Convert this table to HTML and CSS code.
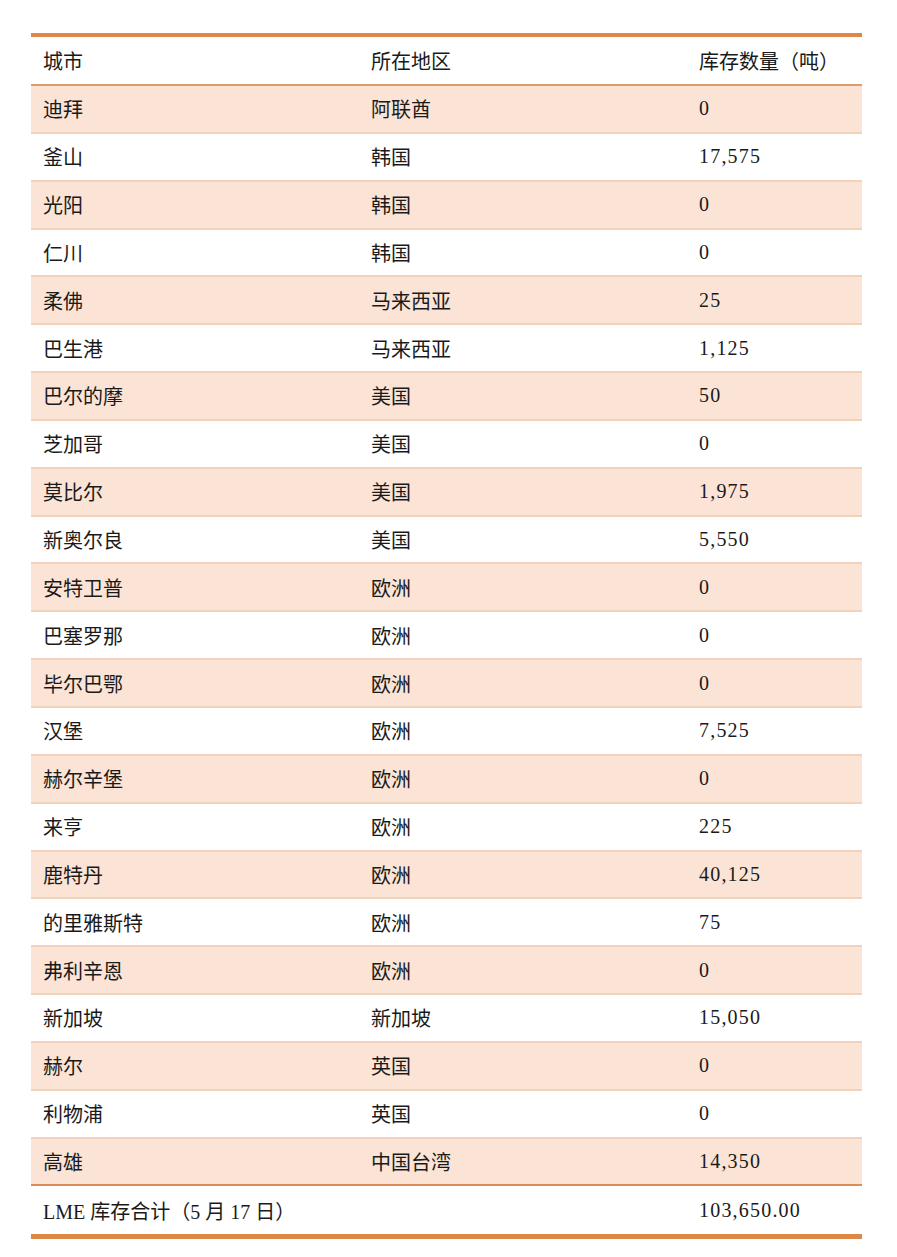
FILE: index.html
```html
<!DOCTYPE html>
<html lang="zh-CN">
<head>
<meta charset="utf-8">
<title>LME 库存</title>
<link rel="stylesheet" href="styles.css">
</head>
<body>
<table class="stock">
  <thead>
    <tr><th>城市</th><th>所在地区</th><th>库存数量（吨）</th></tr>
  </thead>
  <tbody>
    <tr class="alt"><td>迪拜</td><td>阿联酋</td><td>0</td></tr>
    <tr><td>釜山</td><td>韩国</td><td>17,575</td></tr>
    <tr class="alt"><td>光阳</td><td>韩国</td><td>0</td></tr>
    <tr><td>仁川</td><td>韩国</td><td>0</td></tr>
    <tr class="alt"><td>柔佛</td><td>马来西亚</td><td>25</td></tr>
    <tr><td>巴生港</td><td>马来西亚</td><td>1,125</td></tr>
    <tr class="alt"><td>巴尔的摩</td><td>美国</td><td>50</td></tr>
    <tr><td>芝加哥</td><td>美国</td><td>0</td></tr>
    <tr class="alt"><td>莫比尔</td><td>美国</td><td>1,975</td></tr>
    <tr><td>新奥尔良</td><td>美国</td><td>5,550</td></tr>
    <tr class="alt"><td>安特卫普</td><td>欧洲</td><td>0</td></tr>
    <tr><td>巴塞罗那</td><td>欧洲</td><td>0</td></tr>
    <tr class="alt"><td>毕尔巴鄂</td><td>欧洲</td><td>0</td></tr>
    <tr><td>汉堡</td><td>欧洲</td><td>7,525</td></tr>
    <tr class="alt"><td>赫尔辛堡</td><td>欧洲</td><td>0</td></tr>
    <tr><td>来亨</td><td>欧洲</td><td>225</td></tr>
    <tr class="alt"><td>鹿特丹</td><td>欧洲</td><td>40,125</td></tr>
    <tr><td>的里雅斯特</td><td>欧洲</td><td>75</td></tr>
    <tr class="alt"><td>弗利辛恩</td><td>欧洲</td><td>0</td></tr>
    <tr><td>新加坡</td><td>新加坡</td><td>15,050</td></tr>
    <tr class="alt"><td>赫尔</td><td>英国</td><td>0</td></tr>
    <tr><td>利物浦</td><td>英国</td><td>0</td></tr>
    <tr class="alt last"><td>高雄</td><td>中国台湾</td><td>14,350</td></tr>
  </tbody>
  <tfoot>
    <tr><td colspan="2">LME 库存合计（5 月 17 日）</td><td>103,650.00</td></tr>
  </tfoot>
</table>
</body>
</html>
```
FILE: styles.css
```css
html, body {
  margin: 0;
  padding: 0;
  background: #ffffff;
}
body {
  padding: 33px 35px 0 31px;
  font-family: "Liberation Serif", "Noto Sans CJK SC", serif;
  color: #1a1a1a;
}
.stock {
  width: 831px;
  border-collapse: collapse;
  table-layout: fixed;
  font-size: 20px;
}
.stock th, .stock td {
  text-align: left;
  font-weight: normal;
  padding: 0 0 0 12px;
  vertical-align: middle;
  white-space: nowrap;
}
.stock th:nth-child(1), .stock th:nth-child(2) { width: 316px; }
.stock thead tr {
  border-top: 4px solid #df8747;
  border-bottom: 2px solid #dc9d6d;
}
.stock thead th {
  height: 47px;
  font-family: "Noto Sans CJK SC", sans-serif;
  font-size: 20px;
}
.stock tbody td {
  height: 45.85px;
  border-bottom: 2px solid #f3d2bb;
}
.stock tbody tr.alt td {
  background: #fbe4d6;
}
.stock tbody td:nth-child(-n+2) {
  font-family: "Noto Sans CJK SC", sans-serif;
}
.stock tbody td:nth-child(3),
.stock tfoot td:nth-child(2) {
  letter-spacing: 1.2px;
}
.stock tbody tr.last td {
  border-bottom: 2px solid #d98c55;
}
.stock tfoot td {
  height: 48px;
  border-bottom: 5px solid #df8747;
}
```
